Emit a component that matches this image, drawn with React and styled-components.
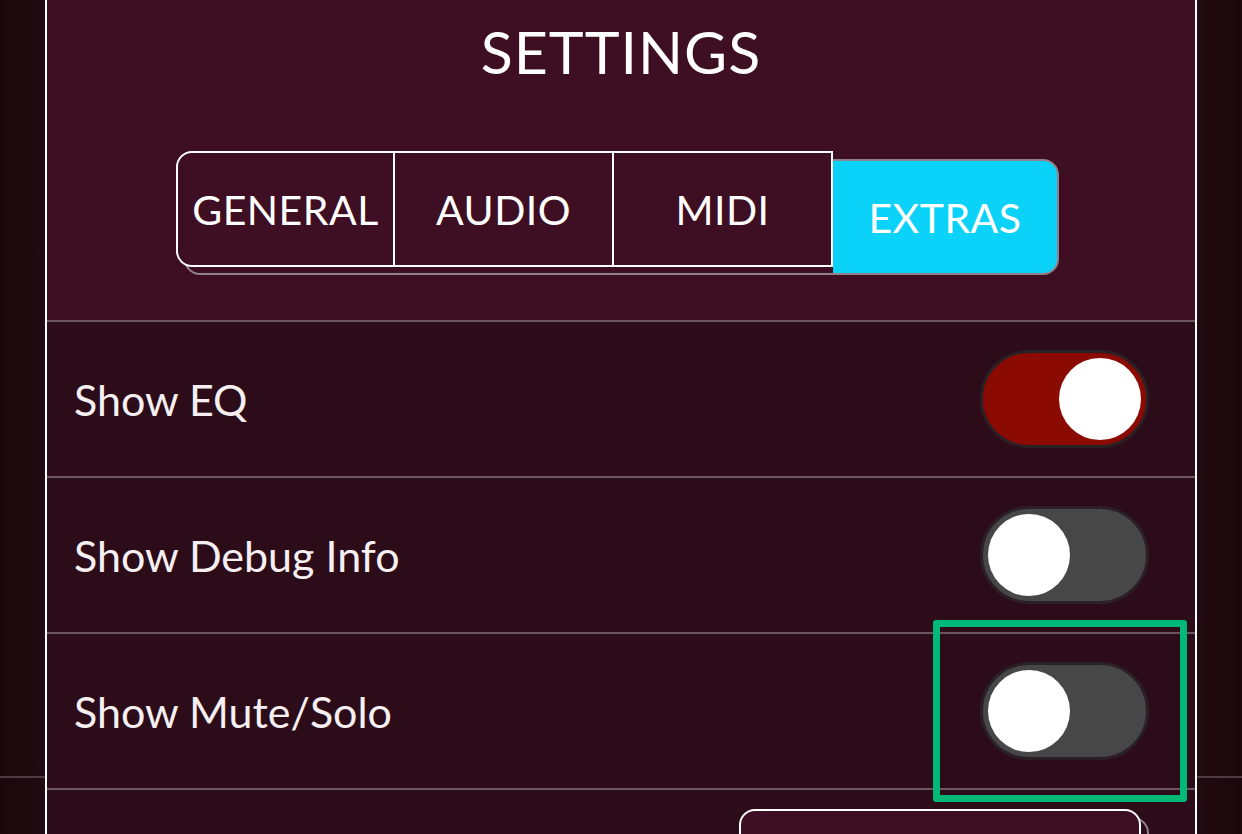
import React from "react";
import styled, { createGlobalStyle } from "styled-components";

const COLORS = {
  outer: "#1d090f",
  header: "#3e0f22",
  body: "#2d0c19",
  divider: "#6b5761",
  depth: "#93828a",
  cyan: "#0bd2f8",
  red: "#8b0a02",
  off: "#474747",
  rim: "#2a2025",
  highlight: "#00b877",
};

const TABS = ["GENERAL", "AUDIO", "MIDI", "EXTRAS"];

const SETTINGS = [
  { label: "Show EQ", on: true },
  { label: "Show Debug Info", on: false },
  { label: "Show Mute/Solo", on: false },
];

const GlobalStyle = createGlobalStyle`
  body {
    margin: 0;
    overflow: hidden;
    font-family: Lato, "Open Sans", sans-serif;
    color: #fff;
  }
`;

const App = () => {
  return (
    <Page>
      <GlobalStyle />
      <Panel>
        <Header>
          <Title>SETTINGS</Title>
          <TabBar>
            <TabGroup>
              {TABS.slice(0, 3).map((tab) => (
                <Tab key={tab}>{tab}</Tab>
              ))}
            </TabGroup>
            <ActiveTab>{TABS[3]}</ActiveTab>
          </TabBar>
        </Header>
        {SETTINGS.map((item) => (
          <Row key={item.label}>
            <Label>{item.label}</Label>
            <Toggle role="switch" aria-checked={item.on} $on={item.on}>
              <Knob />
            </Toggle>
          </Row>
        ))}
        <FooterRow>
          <FooterButton />
        </FooterRow>
      </Panel>
      <Highlight />
    </Page>
  );
};

const Page = styled.div`
  position: relative;
  height: 834px;
  display: flex;
  justify-content: center;
  align-items: flex-start;
  overflow: hidden;
  background:
    linear-gradient(
      to bottom,
      transparent 776px,
      #4d3c43 776px,
      #4d3c43 778px,
      transparent 778px
    ),
    linear-gradient(to right, #1a070c, #220b12 4%, #220b12 96%, #1a070c),
    ${COLORS.outer};
`;

const Panel = styled.div`
  width: 1148px;
  min-height: 834px;
  border-left: 2px solid #fff;
  border-right: 2px solid #fff;
  background: ${COLORS.body};
  display: flex;
  flex-direction: column;
`;

const Header = styled.div`
  flex-shrink: 0;
  height: 320px;
  background: ${COLORS.header};
  display: flex;
  flex-direction: column;
  align-items: center;
`;

const Title = styled.h1`
  margin: 14px 0 0;
  font-size: 59px;
  font-weight: 400;
  line-height: 76px;
  letter-spacing: 1px;
`;

const TabBar = styled.div`
  position: relative;
  z-index: 0;
  margin-top: 61px;
  margin-left: -7px;
  display: flex;
  align-items: flex-start;
`;

const TabGroup = styled.div`
  position: relative;
  display: flex;

  &::before {
    content: "";
    position: absolute;
    top: 8px;
    left: 8px;
    right: -8px;
    bottom: -8px;
    border: 2px solid ${COLORS.depth};
    border-radius: 16px 0 0 16px;
    z-index: -1;
  }
`;

const Tab = styled.div`
  box-sizing: border-box;
  width: 219px;
  height: 116px;
  display: flex;
  align-items: center;
  justify-content: center;
  background: ${COLORS.header};
  border: 2px solid #fff;
  border-left: none;
  font-size: 41px;
  letter-spacing: 0.5px;

  &:first-child {
    border-left: 2px solid #fff;
    border-radius: 16px 0 0 16px;
  }
`;

const ActiveTab = styled.div`
  box-sizing: border-box;
  margin-top: 8px;
  width: 226px;
  height: 116px;
  display: flex;
  align-items: center;
  justify-content: center;
  background: ${COLORS.cyan};
  border: 2px solid ${COLORS.depth};
  border-left: none;
  border-radius: 0 16px 16px 0;
  font-size: 41px;
  letter-spacing: 0.5px;
`;

const Row = styled.div`
  flex-shrink: 0;
  height: 154px;
  border-top: 2px solid ${COLORS.divider};
  display: flex;
  align-items: center;
  justify-content: space-between;
  padding: 0 46px 0 27px;
`;

const Label = styled.span`
  font-size: 43px;
  color: #f6f0f2;
`;

const Toggle = styled.div`
  box-sizing: border-box;
  width: 169px;
  height: 98px;
  padding: 5px;
  border-radius: 49px;
  border: 3px solid ${COLORS.rim};
  background: ${(p) => (p.$on ? COLORS.red : COLORS.off)};
  display: flex;
  justify-content: ${(p) => (p.$on ? "flex-end" : "flex-start")};
  align-items: center;
`;

const Knob = styled.div`
  width: 82px;
  height: 82px;
  border-radius: 50%;
  background: #fff;
`;

const FooterRow = styled.div`
  position: relative;
  z-index: 0;
  flex: 1 0 auto;
  border-top: 2px solid ${COLORS.divider};
  display: flex;
  justify-content: flex-end;
  align-items: flex-start;
  padding: 19px 54px 0 0;
`;

const FooterButton = styled.div`
  position: relative;
  box-sizing: border-box;
  width: 402px;
  height: 116px;
  background: ${COLORS.header};
  border: 2px solid #fff;
  border-radius: 16px 16px 0 0;

  &::before {
    content: "";
    position: absolute;
    top: 6px;
    left: 6px;
    right: -10px;
    bottom: -10px;
    border: 2px solid ${COLORS.depth};
    border-radius: 16px 16px 0 0;
    z-index: -1;
  }
`;

const Highlight = styled.div`
  position: absolute;
  left: 933px;
  top: 620px;
  width: 240px;
  height: 168px;
  border: 7px solid ${COLORS.highlight};
  border-radius: 3px;
  pointer-events: none;
`;

export default App;
